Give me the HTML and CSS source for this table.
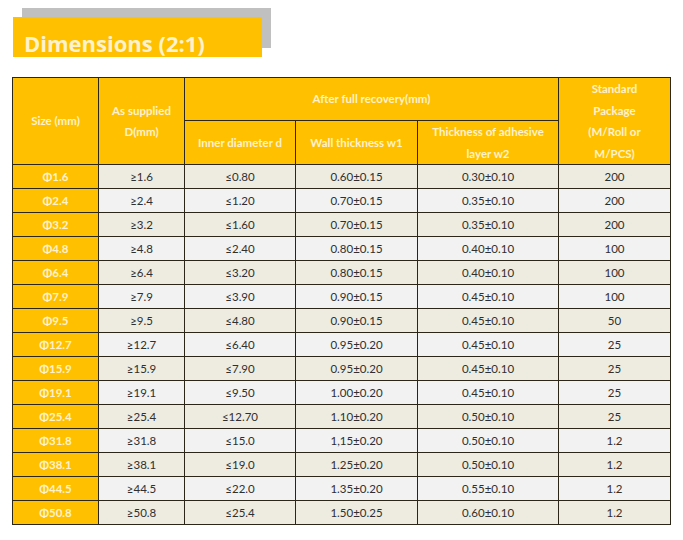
FILE: index.html
```html
<!DOCTYPE html>
<html>
<head>
<meta charset="utf-8">
<link rel="stylesheet" href="styles.css">
</head>
<body>
<div class="page">
  <div class="title-wrap"><h1 class="title">Dimensions (2:1)</h1></div>
  <table class="dims">
    <colgroup>
      <col class="c1"><col class="c2"><col class="c3"><col class="c4"><col class="c5"><col class="c6">
    </colgroup>
    <thead>
      <tr class="h1">
        <th rowspan="2">Size (mm)</th>
        <th rowspan="2">As supplied<br>D(mm)</th>
        <th colspan="3">After full recovery(mm)</th>
        <th rowspan="2">Standard<br>Package<br>(M/Roll or<br>M/PCS)</th>
      </tr>
      <tr class="h2">
        <th>Inner diameter d</th>
        <th>Wall thickness w1</th>
        <th>Thickness of adhesive<br>layer w2</th>
      </tr>
    </thead>
    <tbody>
      <tr><th>Φ1.6</th><td>≥1.6</td><td>≤0.80</td><td>0.60±0.15</td><td>0.30±0.10</td><td>200</td></tr>
      <tr><th>Φ2.4</th><td>≥2.4</td><td>≤1.20</td><td>0.70±0.15</td><td>0.35±0.10</td><td>200</td></tr>
      <tr><th>Φ3.2</th><td>≥3.2</td><td>≤1.60</td><td>0.70±0.15</td><td>0.35±0.10</td><td>200</td></tr>
      <tr><th>Φ4.8</th><td>≥4.8</td><td>≤2.40</td><td>0.80±0.15</td><td>0.40±0.10</td><td>100</td></tr>
      <tr><th>Φ6.4</th><td>≥6.4</td><td>≤3.20</td><td>0.80±0.15</td><td>0.40±0.10</td><td>100</td></tr>
      <tr><th>Φ7.9</th><td>≥7.9</td><td>≤3.90</td><td>0.90±0.15</td><td>0.45±0.10</td><td>100</td></tr>
      <tr><th>Φ9.5</th><td>≥9.5</td><td>≤4.80</td><td>0.90±0.15</td><td>0.45±0.10</td><td>50</td></tr>
      <tr><th>Φ12.7</th><td>≥12.7</td><td>≤6.40</td><td>0.95±0.20</td><td>0.45±0.10</td><td>25</td></tr>
      <tr><th>Φ15.9</th><td>≥15.9</td><td>≤7.90</td><td>0.95±0.20</td><td>0.45±0.10</td><td>25</td></tr>
      <tr><th>Φ19.1</th><td>≥19.1</td><td>≤9.50</td><td>1.00±0.20</td><td>0.45±0.10</td><td>25</td></tr>
      <tr><th>Φ25.4</th><td>≥25.4</td><td>≤12.70</td><td>1.10±0.20</td><td>0.50±0.10</td><td>25</td></tr>
      <tr><th>Φ31.8</th><td>≥31.8</td><td>≤15.0</td><td>1,15±0.20</td><td>0.50±0.10</td><td>1.2</td></tr>
      <tr><th>Φ38.1</th><td>≥38.1</td><td>≤19.0</td><td>1.25±0.20</td><td>0.50±0.10</td><td>1.2</td></tr>
      <tr><th>Φ44.5</th><td>≥44.5</td><td>≤22.0</td><td>1.35±0.20</td><td>0.55±0.10</td><td>1.2</td></tr>
      <tr><th>Φ50.8</th><td>≥50.8</td><td>≤25.4</td><td>1.50±0.25</td><td>0.60±0.10</td><td>1.2</td></tr>
    </tbody>
  </table>
</div>
</body>
</html>
```

FILE: styles.css
```css
html, body {
  margin: 0;
  padding: 0;
  background: #ffffff;
}

.page {
  padding: 17px 0 0 12px;
  font-family: Lato, "Liberation Sans", sans-serif;
}

.title-wrap {
  margin-left: 1px;
  width: 249px;
  height: 40px;
  background: #ffc000;
  box-shadow: 9px -9px 0 #c0c0c0;
  box-sizing: border-box;
  padding: 12px 0 0 11px;
}

.title {
  margin: 0;
  font-family: "Open Sans", Lato, sans-serif;
  font-size: 22px;
  line-height: 28px;
  font-weight: 700;
  color: #fff2cc;
  white-space: nowrap;
}

.dims {
  margin-top: 20px;
  border-collapse: collapse;
  table-layout: fixed;
  width: 658px;
  font-size: 11px;
}

.c1 { width: 86px; }
.c2 { width: 86px; }
.c3 { width: 111px; }
.c4 { width: 122px; }
.c5 { width: 141px; }
.c6 { width: 112px; }

.dims th,
.dims td {
  border: 1px solid #2b2618;
  padding: 0;
  text-align: center;
  vertical-align: middle;
}

.dims th {
  background: #ffc000;
  color: #fff2cc;
  font-weight: 700;
  font-size: 11.5px;
  line-height: 21.5px;
}

.dims thead tr.h1 { height: 43px; }
.dims thead tr.h2 { height: 43px; }

.dims tbody tr { height: 24px; }

.dims td {
  color: #2f2f2f;
  font-size: 11.5px;
  background: #eeece1;
}

.dims tbody tr:nth-child(even) td {
  background: #f2f2f2;
}
```
